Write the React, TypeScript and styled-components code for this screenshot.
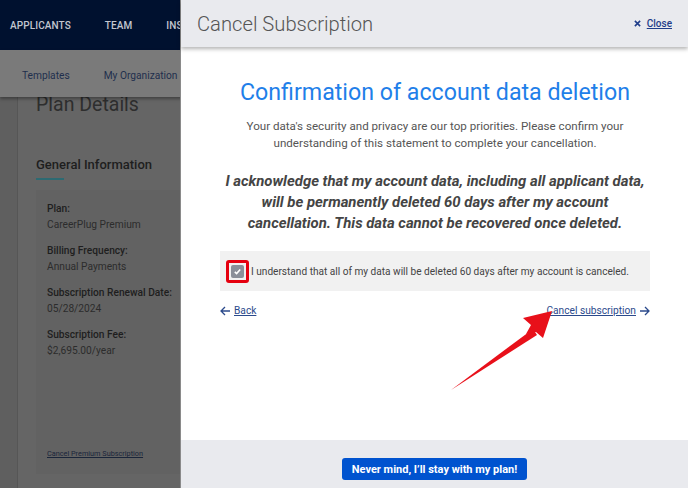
import React from 'react';
import styled, { createGlobalStyle } from 'styled-components';

const GlobalStyle = createGlobalStyle`
  html, body {
    margin: 0;
    padding: 0;
    font-family: Roboto, "Liberation Sans", Arial, sans-serif;
  }
  * {
    box-sizing: border-box;
  }
`

const Screen = styled.div`
  width: 688px;
  height: 488px;
  position: relative;
  overflow: hidden;
  background: #5f5f5f;
`

const Page = styled.div`
  display: flex;
  flex-direction: column;
  height: 100%;
`

const TopNav = styled.div`
  height: 50px;
  background: #00112f;
  display: flex;
  align-items: center;
  gap: 34px;
  padding-left: 10px;
`

const NavItem = styled.span`
  color: #c3c7cf;
  font-size: 10px;
  font-weight: 500;
  letter-spacing: 0.1px;
`

const SubNav = styled.div`
  height: 47px;
  background: #7a7a7a;
  display: flex;
  align-items: center;
  gap: 34px;
  padding: 3px 0 0 22px;
  position: relative;
  z-index: 1;
  box-shadow: 0 2px 3px rgba(0, 0, 0, 0.35);
`

const SubNavItem = styled.span`
  color: #1f2f4d;
  font-size: 10.2px;
`

const Main = styled.div`
  flex: 1;
  display: flex;
`

const SideStrip = styled.div`
  width: 18px;
  background: #5f5f5f;
  border-right: 1px solid #565656;
`

const Content = styled.div`
  flex: 1;
  background: #656565;
  padding: 0 0 0 18px;
  display: flex;
  flex-direction: column;
`

const PlanTitle = styled.div`
  font-size: 19.5px;
  color: #2e2e2e;
  margin-top: -4px;
  height: 50px;
`

const SectionTitle = styled.div`
  margin-top: 14px;
  font-size: 13px;
  font-weight: 500;
  color: #1e1e1e;
`

const Underline = styled.div`
  width: 28px;
  height: 2px;
  background: #2d6a72;
  margin-top: 6px;
`

const InfoCard = styled.div`
  margin-top: 10px;
  background: #626262;
  height: 284px;
  padding: 11px 0 0 11px;
  display: flex;
  flex-direction: column;
`

const Field = styled.div`
  margin-bottom: 10px;
  line-height: 16px;
  font-size: 10.2px;
  white-space: nowrap;
`

const FieldLabel = styled.div`
  font-weight: 500;
  color: #1e1e1e;
`

const FieldValue = styled.div`
  color: #2c2c2c;
`

const TinyLink = styled.span`
  margin-top: auto;
  margin-bottom: 16px;
  font-size: 7.3px;
  color: #1a253a;
  text-decoration: underline;
`

const Drawer = styled.div`
  position: absolute;
  top: 0;
  right: 0;
  bottom: 0;
  width: 508px;
  background: #fff;
  display: flex;
  flex-direction: column;
  border-left: 1px solid #8a8a8a;
  z-index: 2;
`

const DrawerHeader = styled.div`
  height: 47px;
  background: #e9eaee;
  display: flex;
  align-items: center;
  justify-content: space-between;
  padding: 0 16px 0 16px;
  box-shadow: 0 2px 4px rgba(0, 0, 0, 0.3);
  position: relative;
  z-index: 1;
`

const DrawerTitle = styled.span`
  font-size: 20.2px;
  font-weight: 300;
  color: #555;
`

const CloseLink = styled.span`
  font-size: 10px;
  font-weight: 500;
  color: #1f3d8a;
  display: flex;
  align-items: center;
  gap: 6px;
  u {
    text-decoration: underline;
  }
`

const DrawerBody = styled.div`
  flex: 1;
  padding: 31px 38px 0 39px;
  display: flex;
  flex-direction: column;
  align-items: center;
  position: relative;
`

const Heading = styled.h1`
  margin: 0;
  font-size: 23.2px;
  line-height: 28px;
  font-weight: 400;
  color: #1f7fe9;
  text-align: center;
`

const Intro = styled.p`
  margin: 12px 0 0;
  font-size: 11.6px;
  line-height: 17px;
  color: #555;
  text-align: center;
`

const Statement = styled.p`
  margin: 19px 0 0;
  max-width: 426px;
  font-size: 14.9px;
  line-height: 21px;
  font-weight: 700;
  font-style: italic;
  color: #444;
  text-align: center;
`

const CheckRow = styled.div`
  align-self: stretch;
  margin-top: 17px;
  height: 40px;
  background: #f1f1f1;
  display: flex;
  align-items: center;
  padding-left: 6px;
  font-size: 10.1px;
  color: #444;
`

const CheckHighlight = styled.span`
  width: 23px;
  height: 23px;
  border: 3px solid #e5000f;
  border-radius: 3px;
  display: flex;
  align-items: center;
  justify-content: center;
  margin-right: 2px;
`

const CheckBox = styled.span`
  width: 13px;
  height: 13px;
  background: #8a8f99;
  border-radius: 2px;
  display: flex;
  align-items: center;
  justify-content: center;
`

const LinkRow = styled.div`
  align-self: stretch;
  margin-top: 14px;
  display: flex;
  justify-content: space-between;
  font-size: 10.2px;
  color: #2b4a8c;
`

const NavLink = styled.span`
  display: flex;
  align-items: center;
  gap: 3px;
  u {
    text-decoration: underline;
  }
`

const ArrowOverlay = styled.svg`
  position: absolute;
  left: 0;
  top: 0;
  pointer-events: none;
`

const DrawerFooter = styled.div`
  height: 48px;
  background: #e9eaee;
  display: flex;
  justify-content: center;
  padding-top: 18px;
`

const StayButton = styled.button`
  height: 22px;
  width: 185px;
  padding: 0;
  border: none;
  border-radius: 3px;
  background: #0053cf;
  color: #fff;
  font-family: inherit;
  font-size: 11px;
  font-weight: 700;
`

const fields = [
  ['Plan:', 'CareerPlug Premium'],
  ['Billing Frequency:', 'Annual Payments'],
  ['Subscription Renewal Date:', '05/28/2024'],
  ['Subscription Fee:', '$2,695.00/year'],
];

export default function App() {
  return (
    <Screen>
      <GlobalStyle />
      <Page>
        <TopNav>
          <NavItem>APPLICANTS</NavItem>
          <NavItem>TEAM</NavItem>
          <NavItem>INSIGHTS</NavItem>
        </TopNav>
        <SubNav>
          <SubNavItem>Templates</SubNavItem>
          <SubNavItem>My Organization</SubNavItem>
        </SubNav>
        <Main>
          <SideStrip />
          <Content>
            <PlanTitle>Plan Details</PlanTitle>
            <SectionTitle>General Information</SectionTitle>
            <Underline />
            <InfoCard>
              {fields.map(([label, value]) => (
                <Field key={label}>
                  <FieldLabel>{label}</FieldLabel>
                  <FieldValue>{value}</FieldValue>
                </Field>
              ))}
              <TinyLink>Cancel Premium Subscription</TinyLink>
            </InfoCard>
          </Content>
        </Main>
      </Page>

      <Drawer>
        <DrawerHeader>
          <DrawerTitle>Cancel Subscription</DrawerTitle>
          <CloseLink>
            <svg width="7" height="7" viewBox="0 0 8 8">
              <path d="M1 1L7 7M7 1L1 7" stroke="#1f3d8a" strokeWidth="1.8" />
            </svg>
            <u>Close</u>
          </CloseLink>
        </DrawerHeader>
        <DrawerBody>
          <Heading>Confirmation of account data deletion</Heading>
          <Intro>
            Your data's security and privacy are our top priorities. Please confirm your
            understanding of this statement to complete your cancellation.
          </Intro>
          <Statement>
            I acknowledge that my account data, including all applicant data, will be
            permanently deleted 60 days after my account cancellation. This data cannot be
            recovered once deleted.
          </Statement>
          <CheckRow>
            <CheckHighlight>
              <CheckBox>
                <svg width="9" height="9" viewBox="0 0 9 9">
                  <path d="M1.8 4.8L3.6 6.5L7.2 2.5" stroke="#fff" strokeWidth="1.6" fill="none" />
                </svg>
              </CheckBox>
            </CheckHighlight>
            I understand that all of my data will be deleted 60 days after my account is canceled.
          </CheckRow>
          <LinkRow>
            <NavLink>
              <svg width="11" height="10" viewBox="0 0 11 10">
                <path d="M10 5H1.5M5 1L1 5L5 9" stroke="#2b4a8c" strokeWidth="1.3" fill="none" />
              </svg>
              <u>Back</u>
            </NavLink>
            <NavLink>
              <u>Cancel subscription</u>
              <svg width="11" height="10" viewBox="0 0 11 10">
                <path d="M1 5H9.5M6 1L10 5L6 9" stroke="#2b4a8c" strokeWidth="1.3" fill="none" />
              </svg>
            </NavLink>
          </LinkRow>
          <ArrowOverlay width="508" height="393" viewBox="0 0 508 393">
            <path d="M270 343 L352 282 L356 288 L270 343 Z" fill="#e8101a" />
            <path d="M371 264 L342 271 L350 278 L345 287 L355 285 L362 291 Z" fill="#e8101a" />
          </ArrowOverlay>
        </DrawerBody>
        <DrawerFooter>
          <StayButton>Never mind, I’ll stay with my plan!</StayButton>
        </DrawerFooter>
      </Drawer>
    </Screen>
  );
}
